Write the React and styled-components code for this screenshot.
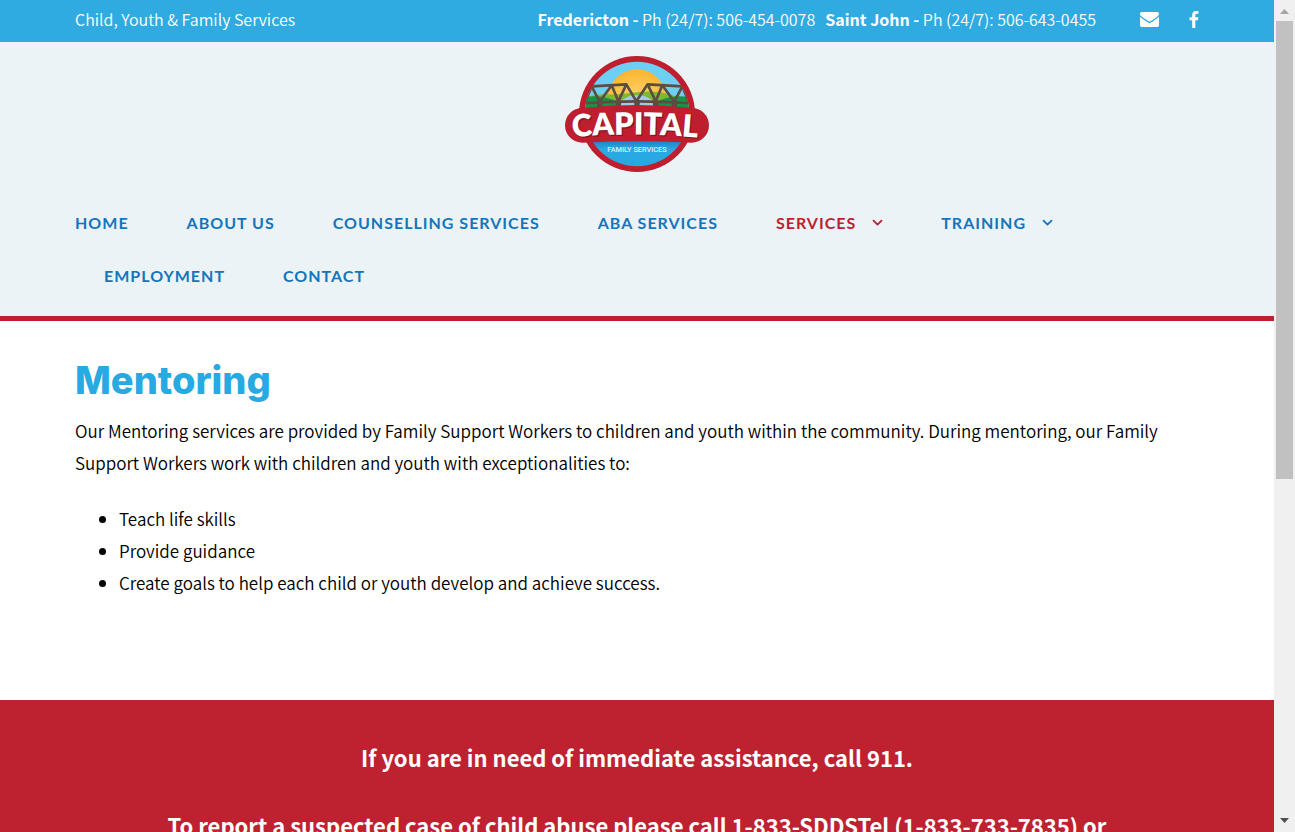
import React from 'react';
import styled, { createGlobalStyle, css } from 'styled-components';

const bodyFont = '"Source Sans Pro", "Noto Sans CJK SC", "Noto Sans", sans-serif';
const navFont = 'Lato, "Open Sans", sans-serif';
const headingFont = 'Inter, Lato, sans-serif';

const colors = {
  sky: '#2fabe1',
  heading: '#27aae1',
  link: '#1375bc',
  red: '#be1e2d',
  footer: '#be2231',
  pale: '#ebf3f7',
};

const GlobalStyle = createGlobalStyle`
  *, *::before, *::after { box-sizing: border-box; }
  body { margin: 0; background: #fff; color: #000; font-family: ${bodyFont}; }
  a { color: inherit; text-decoration: none; }
  p, h1, ul { margin: 0; padding: 0; }
`;

const Window = styled.div`
  display: grid;
  grid-template-columns: minmax(0, 1fr) 21px;
  height: 100vh;
  overflow: hidden;
`;

const Page = styled.div`
  min-height: 0;
  overflow: hidden;
`;

const Container = styled.div`
  width: 100%;
  max-width: 1172px;
  margin: 0 auto;
  padding: 0 24px;
`;

const TopBar = styled.div`
  background: ${colors.sky};
  color: #fff;
  padding-bottom: 4px;
  font-size: 16px;
  font-weight: 350;
  line-height: 38px;
`;

const TopRow = styled(Container)`
  display: flex;
  justify-content: space-between;
`;

const Contacts = styled.div`
  display: flex;
  align-items: center;
`;

const Phone = styled.span`
  margin-right: 10px;

  strong { font-weight: 700; }
`;

const Social = styled.div`
  display: flex;
  align-items: center;
  gap: 30px;
  margin-left: 34px;

  a { display: flex; }
  svg { display: block; fill: currentColor; }
`;

const Header = styled.header`
  background: ${colors.pale};
  border-bottom: 5px solid ${colors.red};
  padding: 14px 0;
`;

const LogoLink = styled.a`
  display: block;
  width: 144px;
  margin: 0 auto 24px;

  svg { display: block; }
`;

const Menu = styled.ul`
  display: flex;
  flex-wrap: wrap;
  list-style: none;
`;

const MenuItem = styled.li`
  margin: 0 29px;

  &:first-child { margin-left: 0; }
`;

const MenuLink = styled.a`
  display: flex;
  align-items: center;
  gap: 16px;
  color: ${colors.link};
  font: 700 16px/53px ${navFont};
  letter-spacing: 1px;
  text-transform: uppercase;

  ${({ $current }) => $current && css`color: ${colors.red};`}
`;

const Main = styled(Container)`
  padding-top: 35px;
  padding-bottom: 101px;
  font-size: 17px;
  font-weight: 350;
  line-height: 32px;
`;

const Title = styled.h1`
  margin-bottom: 11px;
  color: ${colors.heading};
  font: 800 38px/48px ${headingFont};
`;

const List = styled.ul`
  margin-top: 24px;
  padding-left: 44px;
`;

const Footer = styled.footer`
  background: ${colors.footer};
  color: #fff;
  padding: 37px 0;
  font-size: 22px;
  font-weight: 700;
  line-height: 40px;
  text-align: center;
`;

const Notice = styled.p`
  margin-bottom: 28px;
`;

const ScrollTrack = styled.div`
  display: flex;
  flex-direction: column;
  align-items: center;
  background: #f0f0f0;

  svg { display: block; flex: none; }
`;

const ScrollSpace = styled.div`
  flex: 1;
  width: 17px;
`;

const ScrollThumb = styled.div`
  height: 58%;
  background: #c1c1c1;
`;

function MailIcon() {
  return (
    <svg width="19" height="15" viewBox="0 256 1792 1408" aria-hidden="true">
      <path d="M1792 710v794q0 66-47 113t-113 47h-1472q-66 0-113-47t-47-113v-794q44 49 101 87 362 246 497 345 57 42 92.500 65.500t94.500 48 110 24.500h2q51 0 110-24.500t94.500-48 92.500-65.500q170-123 498-345 57-39 100-87zm0-294q0 79-49 151t-122 123q-376 261-468 325-10 7-42.500 31t-54 38.800-52 33.200-57.500 27-50 9h-2q-23 0-50-9t-57.500-27-52-33.200-54-38.800-42.500-31q-91-64-262-182.500t-205-142.500q-62-42-117-115.500t-55-136.500q0-78 41.500-130t118.500-52h1472q65 0 112.500 47t47.500 113z" />
    </svg>
  );
}

function FacebookIcon() {
  return (
    <svg width="10" height="17" viewBox="479 0 864 1664" aria-hidden="true">
      <path d="M1343 12v264h-157q-86 0-116 36t-30 108v189h293l-39 296h-254v759h-306v-759h-255v-296h255v-218q0-186 104-288.500t277-102.500q147 0 228 12z" />
    </svg>
  );
}

function Chevron() {
  return (
    <svg width="11" height="7" viewBox="0 0 11 7" aria-hidden="true">
      <path d="M1.500 1.600l4 4 4-4" fill="none" stroke="currentColor" strokeWidth="1.800" strokeLinecap="round" strokeLinejoin="round" />
    </svg>
  );
}

function Logo() {
  return (
    <svg width="144" height="116" viewBox="24 18 432 348" role="img" aria-label="Capital Family Services">
      <defs>
        <radialGradient id="sun" cx="50%" cy="70%" r="65%">
          <stop offset="0" stopColor="#ffdf8a" />
          <stop offset="1" stopColor="#fcb835" />
        </radialGradient>
        <linearGradient id="sea" x1="0" y1="0" x2="0" y2="1">
          <stop offset="0" stopColor="#1b7fc0" />
          <stop offset="0.3" stopColor="#2aa9e1" />
          <stop offset="1" stopColor="#27a8e4" />
        </linearGradient>
        <clipPath id="disc"><circle cx="240" cy="192" r="157" /></clipPath>
        <path id="arc" d="M34 262 Q234 244 434 264" />
      </defs>
      <circle cx="240" cy="192" r="174" fill={colors.red} />
      <g clipPath="url(#disc)">
        <rect x="80" y="30" width="320" height="160" fill="#6dcff6" />
        <circle cx="240" cy="146" r="88" fill="url(#sun)" />
        <path d="M80 145Q110 132 150 133T240 127T330 131T400 145V185H80z" fill="#7fb92f" />
        <path d="M80 142Q130 132 170 150L190 185H80zM400 142Q350 132 310 150L290 185H400z" fill="#18934a" />
        <path d="M225 136Q180 150 175 185H305Q300 150 255 136z" fill="#a3c8e6" />
        <g fill="none" stroke="#5c4c42" strokeWidth="8" strokeLinejoin="round">
          <path d="M78 160Q240 148 402 160" />
          <path d="M84 158L104 109L208 103L238 154L272 103L376 109L396 158" />
          <path d="M104 109L128 155L164 106L184 154L208 103M272 103L296 154L316 106L352 155L376 109" />
        </g>
        <path d="M118 154h20l-4 24h-12zM174 152h20l-4 24h-12zM230 151h20l-4 24h-12zM286 152h20l-4 24h-12zM342 154h20l-4 24h-12z" fill="#5c4c42" />
        <rect x="80" y="270" width="320" height="90" fill="url(#sea)" />
      </g>
      <path d="M76 174Q240 156 404 174A52 52 0 0 1 404 278Q240 270 76 278A52 52 0 0 1 76 174z" fill={colors.red} />
      <g fontFamily={navFont} fontWeight="800" fontSize="92" textAnchor="middle">
        <text fill="#861420" transform="translate(3 4)"><textPath href="#arc" startOffset="50%">CAPITAL</textPath></text>
        <text fill="#fff"><textPath href="#arc" startOffset="50%">CAPITAL</textPath></text>
      </g>
      <text x="240" y="307" fill="#d8f1fc" fontFamily="Roboto, sans-serif" fontWeight="500" fontSize="22" textAnchor="middle">FAMILY SERVICES</text>
    </svg>
  );
}

function ScrollArrow({ up }) {
  return (
    <svg width="21" height="21" viewBox="0 0 21 21" aria-hidden="true">
      {up ? <path d="M6 14h9l-4.500-5z" fill="#a3a3a3" /> : <path d="M6 7h9l-4.500 5z" fill="#505050" />}
    </svg>
  );
}

const menu = [
  { label: 'Home' },
  { label: 'About Us' },
  { label: 'Counselling Services' },
  { label: 'ABA Services' },
  { label: 'Services', current: true, sub: true },
  { label: 'Training', sub: true },
  { label: 'Employment' },
  { label: 'Contact' },
];

export default function App() {
  return (
    <>
      <GlobalStyle />
      <Window>
        <Page>
          <TopBar>
            <TopRow>
              <span>Child, Youth &amp; Family Services</span>
              <Contacts>
                <Phone><strong>Fredericton -</strong> Ph (24/7): 506-454-0078</Phone>
                <Phone><strong>Saint John -</strong> Ph (24/7): 506-643-0455</Phone>
                <Social>
                  <a href="#mail" aria-label="Email"><MailIcon /></a>
                  <a href="#facebook" aria-label="Facebook"><FacebookIcon /></a>
                </Social>
              </Contacts>
            </TopRow>
          </TopBar>
          <Header>
            <LogoLink href="#home"><Logo /></LogoLink>
            <Container as="nav">
              <Menu>
                {menu.map(({ label, current, sub }) => (
                  <MenuItem key={label}>
                    <MenuLink href="#" $current={current} aria-current={current ? 'page' : undefined}>
                      {label}
                      {sub && <Chevron />}
                    </MenuLink>
                  </MenuItem>
                ))}
              </Menu>
            </Container>
          </Header>
          <Main as="main">
            <Title>Mentoring</Title>
            <p>
              Our Mentoring services are provided by Family Support Workers to children and youth within the
              community. During mentoring, our Family Support Workers work with children and youth with
              exceptionalities to:
            </p>
            <List>
              <li>Teach life skills</li>
              <li>Provide guidance</li>
              <li>Create goals to help each child or youth develop and achieve success.</li>
            </List>
          </Main>
          <Footer>
            <Container>
              <Notice>If you are in need of immediate assistance, call 911.</Notice>
              <Notice>To report a suspected case of child abuse please call 1-833-SDDSTel (1-833-733-7835) or</Notice>
            </Container>
          </Footer>
        </Page>
        <ScrollTrack aria-hidden="true">
          <ScrollArrow up />
          <ScrollSpace><ScrollThumb /></ScrollSpace>
          <ScrollArrow />
        </ScrollTrack>
      </Window>
    </>
  );
}
